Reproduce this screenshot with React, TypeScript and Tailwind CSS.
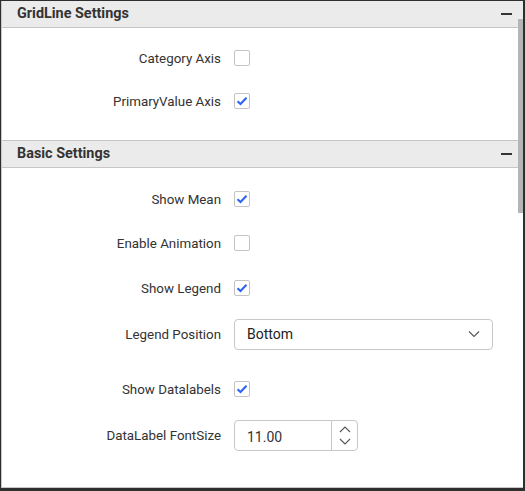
import React from "react";

const font = { fontFamily: "Roboto, 'Liberation Sans', sans-serif" };

function Minus() {
  return <div className="w-[11px] h-[2px] bg-[#333333]" />;
}

function Header({ title }: { title: string }) {
  return (
    <div className="h-[27px] flex items-center justify-between bg-[#ebebeb] border-b border-[#c6c6c6] pl-[15px] pr-[11px]">
      <span className="text-[14.4px] font-bold text-[#333333] leading-none">{title}</span>
      <Minus />
    </div>
  );
}

function Check({ checked }: { checked?: boolean }) {
  return (
    <div className="w-[16px] h-[16px] border border-[#c4c4c4] rounded-[2px] bg-white flex items-center justify-center">
      {checked && (
        <svg width="12" height="10" viewBox="0 0 12 10">
          <path d="M1.5 5.2 L4.5 8 L10.5 1.8" fill="none" stroke="#2a63f5" strokeWidth="2" />
        </svg>
      )}
    </div>
  );
}

function Row({ label, h, children, className = "" }: { label: string; h: number; children: React.ReactNode; className?: string }) {
  return (
    <div className={"flex items-center " + className} style={{ height: h }}>
      <div className="w-[219px] text-right text-[13.35px] text-[#333333] leading-none pt-[2px]">{label}</div>
      <div className="ml-[13px] flex items-center">{children}</div>
    </div>
  );
}

export default function App() {
  return (
    <div
      className="w-[525px] h-[491px] bg-white border-t border-l border-r-2 border-b-[3px] border-[#2e2e2e] relative overflow-hidden"
      style={font}
    >
      <div className="h-full border-l border-[#c8c8c8] flex flex-col">
        <Header title="GridLine Settings" />
        <div className="pt-[8px] pb-[18px] border-b border-[#c6c6c6]">
          <Row label="Category Axis" h={43}>
            <Check />
          </Row>
          <Row label="PrimaryValue Axis" h={43}>
            <Check checked />
          </Row>
        </div>
        <Header title="Basic Settings" />
        <div className="flex-1 pt-[9px] border-b border-[#c6c6c6]">
          <Row label="Show Mean" h={44}>
            <Check checked />
          </Row>
          <Row label="Enable Animation" h={44}>
            <Check />
          </Row>
          <Row label="Show Legend" h={45}>
            <Check checked />
          </Row>
          <Row label="Legend Position" h={48}>
            <div className="w-[259px] h-[31px] border border-[#c8c8c8] rounded-[4px] flex items-center justify-between pl-[12px] pr-[12px]">
              <span className="text-[14px] text-[#222222] leading-none">Bottom</span>
              <svg width="12" height="8" viewBox="0 0 12 8">
                <path d="M1 1.5 L6 6.5 L11 1.5" fill="none" stroke="#555555" strokeWidth="1.1" />
              </svg>
            </div>
          </Row>
          <Row label="Show Datalabels" h={44} className="mt-[9px]">
            <Check checked />
          </Row>
          <Row label="DataLabel FontSize" h={48}>
            <div className="w-[124px] h-[31px] border border-[#c8c8c8] rounded-[4px] flex mt-[1px]">
              <div className="w-[96px] flex items-center pl-[12px] text-[14px] text-[#333333] leading-none pt-[2px]">11.00</div>
              <div className="flex-1 border-l border-[#c8c8c8] flex flex-col items-center justify-center gap-[5px]">
                <svg width="12" height="7" viewBox="0 0 12 7">
                  <path d="M1 6 L6 1 L11 6" fill="none" stroke="#555555" strokeWidth="1.1" />
                </svg>
                <svg width="12" height="7" viewBox="0 0 12 7">
                  <path d="M1 1 L6 6 L11 1" fill="none" stroke="#555555" strokeWidth="1.1" />
                </svg>
              </div>
            </div>
          </Row>
        </div>
      </div>
      <div className="absolute right-0 top-[18px] w-[5px] h-[194px] bg-[#b5b5b5]" />
    </div>
  );
}
